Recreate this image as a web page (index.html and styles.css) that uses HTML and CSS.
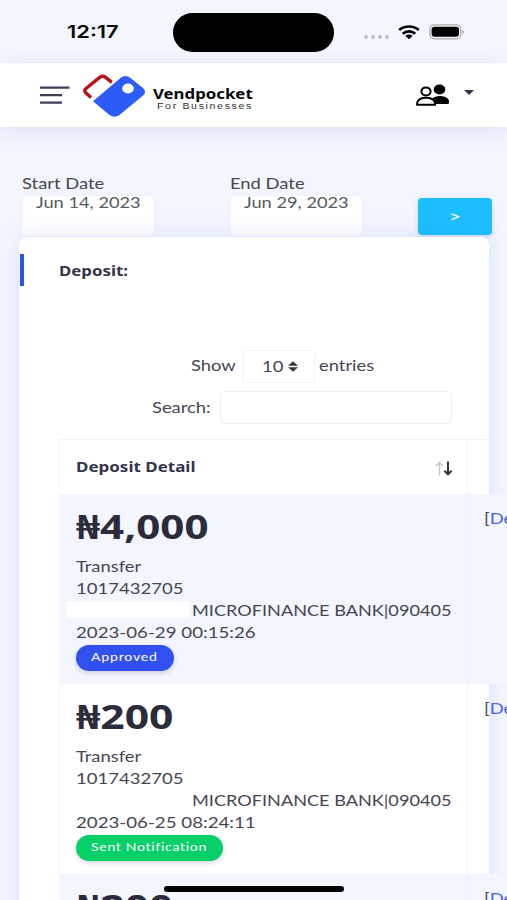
FILE: index.html
```
<!DOCTYPE html>
<html lang="en">
<head>
<meta charset="utf-8">
<title>Vendpocket</title>
<link rel="stylesheet" href="styles.css">
</head>
<body>
<div class="screen">
  <header class="status">
    <span class="clock">12:17</span>
    <div class="island"></div>
    <div class="signal"><i></i><i></i><i></i><i></i></div>
    <svg class="wifi" width="22" height="15" viewBox="0 0 22 15">
      <g fill="none" stroke="#000" stroke-width="2.7"><path d="M1.2 5.1C6.5.3 15.500.3 20.800 5.100"/><path d="M4.800 8.700C8.300 5.600 13.700 5.600 17.200 8.700"/></g>
      <path d="M7.300 10.800Q11 8.200 14.700 10.800L11 14.200Z"/>
    </svg>
    <svg class="battery" width="37" height="16" viewBox="0 0 37 16">
      <rect x=".8" y=".8" width="31" height="14" rx="4.500" fill="#f5f7fd" stroke="#aaabae" stroke-width="1.200"/>
      <rect x="2.600" y="2.800" width="27.400" height="10" rx="3"/>
      <path d="M33.500 5.800Q36 8 33.500 10.200Z" fill="#8d8e92"/>
    </svg>
  </header>

  <nav class="nav">
    <svg class="menu" width="30" height="19" viewBox="0 0 30 19"><path d="M0 1.700H29.500M0 9.200H22M0 16.700H22" stroke="#403d5c" stroke-width="2.200"/></svg>
    <svg class="logo" width="65" height="45" viewBox="0 0 65 45">
      <path d="M9 24.500L3.800 19.800Q1.600 17.500 4 15.500L18 4.200Q20.700 2.200 23.300 4.200L29.800 9.300" fill="none" stroke="#b8111f" stroke-width="3.400"/>
      <path d="M11 28.200L38.500 5Q43.500 1.100 48.500 5L61 15Q65 18.700 61 22.500L37.500 41.900Q32.500 45.500 27.500 41.900Z" fill="#2d5bf8"/>
      <ellipse cx="46" cy="15.500" rx="5.800" ry="5.100" fill="#fff"/>
    </svg>
    <div class="brand"><div class="brand-name">Vendpocket</div><div class="brand-tag">For Businesses</div></div>
    <svg class="people" width="34" height="22" viewBox="0 0 34 22">
      <ellipse cx="23.500" cy="5.500" rx="5.800" ry="5"/>
      <path d="M15 20V15.500Q18 12 24 12Q33 12.500 33 17.500V19Q33 20 31.500 20Z"/>
      <ellipse cx="10" cy="7.400" rx="4.600" ry="4" fill="#fff" stroke="#000" stroke-width="2"/>
      <path d="M1.200 20.700V18.500Q3 13.800 10 13.800T19 18.500V20.700Z" fill="#fff" stroke="#000" stroke-width="2"/>
    </svg>
    <i class="caret"></i>
  </nav>

  <main class="content">
    <form class="filters">
      <label class="field"><span class="text">Start Date</span><span class="date"><span class="text">Jun 14, 2023</span></span></label>
      <label class="field"><span class="text">End Date</span><span class="date"><span class="text">Jun 29, 2023</span></span></label>
      <button type="button" class="go"><span class="text">&gt;</span></button>
    </form>

    <section class="card">
      <h2 class="title"><span class="bold">Deposit:</span></h2>
      <div class="length"><span class="text show">Show</span>
        <span class="select"><span class="text">10</span><svg width="10" height="11" viewBox="0 0 10 11"><path d="M0 4.700L5 .2L10 4.700ZM0 6.300H10L5 10.800Z" fill="#343a40"/></svg></span>
        <span class="text lift">entries</span></div>
      <div class="search"><span class="text label">Search:</span><input class="box" aria-label="Search"></div>

      <div class="table">
        <div class="row head">
          <div class="cell"><span class="bold wide">Deposit Detail</span>
            <svg class="sort" width="18" height="15" viewBox="0 0 18 15"><path d="M4.500 14.500V1.500M1 5.200L4.500 1.500L8 5.200" fill="none" stroke="#c2c2c8" stroke-width="1.300"/><path d="M13 .5V13M9.400 9.800L13 13.300L16.600 9.800" fill="none" stroke="#34343f" stroke-width="2"/></svg>
          </div>
          <div class="cell side"></div>
        </div>
        <div class="row odd">
          <div class="cell">
            <div class="amount">₦4,000</div>
            <div class="line">Transfer</div><div class="line number">1017432705</div>
            <div class="bank"><span class="line">MICROFINANCE BANK|090405</span></div>
            <div class="line stamp">2023-06-29 00:15:26</div>
            <span class="badge approved"><span>Approved</span></span>
          </div>
          <div class="cell side"><span class="text">[<a>Details]</a></span></div>
        </div>
        <div class="row">
          <div class="cell">
            <div class="amount small">₦200</div>
            <div class="line">Transfer</div><div class="line number">1017432705</div>
            <div class="bank"><span class="line">MICROFINANCE BANK|090405</span></div>
            <div class="line stamp">2023-06-25 08:24:11</div>
            <span class="badge sent"><span>Sent Notification</span></span>
          </div>
          <div class="cell side"><span class="text">[<a>Details]</a></span></div>
        </div>
        <div class="row odd">
          <div class="cell"><div class="amount small">₦200</div></div>
          <div class="cell side"><span class="text">[<a>Details]</a></span></div>
        </div>
      </div>
    </section>
  </main>
  <div class="home"></div>
</div>
</body>
</html>
```
FILE: styles.css
```
* { box-sizing: border-box; }
body { margin: 0; font: 15px/22px Lato, "Noto Sans", sans-serif; color: #464652; }
.screen { position: relative; width: 507px; height: 900px; overflow: hidden; background: #f3f6fe; }

/* Wide lettering: glyphs are stretched horizontally from their left edge */
.text, .line, .bold, .amount, .clock, .brand-name, .brand-tag, .badge span {
  display: inline-block; white-space: nowrap; transform: scaleX(1.225); transform-origin: 0 50%;
}
.bold { font: 700 14.5px/22px "Noto Sans", sans-serif; color: #34344a; transform: scaleX(1.16); }
.bold.wide { margin-top: -2px; transform: scaleX(1.17); }

.status { display: flex; align-items: center; height: 63px; padding-top: 1px; }
.clock { flex: none; width: 106px; margin-left: 67px; font: 600 17.5px/22px Inter, sans-serif; color: #08080b; transform: scaleX(1.25); }
.island { width: 161px; height: 39px; border-radius: 20px; background: #000; flex: none; }
.signal { display: flex; gap: 3px; margin: 9px 0 0 30px; }
.signal i { width: 4px; height: 4px; border-radius: 50%; background: #bcbdc5; }
.wifi { margin-left: 9px; flex: none; }
.battery { margin-left: 9px; flex: none; }

.nav { position: relative; display: flex; align-items: center; height: 64px; padding: 0 33px 0 40px; background: #fff; box-shadow: 0 4px 18px rgba(60, 70, 180, .11); }
.logo { margin: 0 0 0 12px; }
.brand { width: 102px; margin: 6px 0 0 6px; color: #08080b; }
.brand-name, .brand-tag { display: block; }
.brand-name { font: 700 14px/15px "Noto Sans", sans-serif; transform: scaleX(1.2); width: 84px; }
.brand-tag { margin: 0 0 0 4px; width: 80px; font: 8.5px/10px "Liberation Sans", sans-serif; letter-spacing: 1.3px; color: #333; transform: scaleX(1.25); }
.people { margin: 0 0 0 auto; }
.caret { margin: -6px 0 0 14px; border: 5px solid transparent; border-top: 5px solid #34344a; border-bottom: 0; }

.content { padding: 0 18px 0 20px; }
.filters { display: flex; height: 110px; padding: 46px 0 0 2px; }
.field { width: 208px; height: 64px; flex: none; }
.field > .text { display: block; height: 22px; width: 80px; line-height: 21px; }
.date { display: block; width: 133px; height: 42px; padding-left: 13px; border: 1px solid #f0f3fb; border-radius: 5px; background: #fff; line-height: 13px; }
.date .text { color: #555c63; transform: scaleX(1.215); }
.go { width: 74px; height: 37px; margin: 25px -12px 0 -20px; padding: 0 0 2px; flex: none; border: 0; border-radius: 4px; background: #1dbfff; color: #fff; font: inherit; box-shadow: 0 2px 6px rgba(30, 80, 255, .15); }
.go .text { transform: scaleX(1.4); transform-origin: 60% 50%; }

.card { position: relative; width: 470px; height: 700px; margin-left: -1px; padding: 17px 0 0 40px; border-radius: 8px; background: #fff; box-shadow: 0 0 25px rgba(80, 100, 220, .14); }
.title { height: 32px; margin: 0 0 0 -39px; padding: 5px 0 0 35px; border-left: 4px solid #2f52ea; font-size: 14px; line-height: 21px; }
.length { display: flex; align-items: center; height: 33px; margin: 64px 0 0 132px; }
.show { width: 51px; }
.show, .lift { margin-top: -3px; }
.select { display: flex; align-items: center; width: 73px; height: 33px; margin-right: 4px; padding-left: 19px; border: 1px solid #f2f3f5; border-radius: 4px; }
.select .text { width: 26px; margin-top: -2px; }
.search { display: flex; align-items: center; height: 33px; margin: 8px 0 0 93px; }
.search .label { width: 68px; margin-top: -2px; }
.box { width: 232px; height: 33px; border: 1px solid #eff0f3; border-radius: 4px; background: #fff; outline: 0; }

.table { width: 520px; margin-top: 15px; border: solid #f2f3f6; border-width: 1px 0 0 1px; }
.row { display: grid; grid-template-columns: 408px 1fr; height: 190px; }
.row.head { height: 54px; }
.row.head .cell { display: flex; align-items: center; justify-content: space-between; padding: 0 14px 0 16px; }
.row.head .cell.side { width: 22px; }
.sort { margin-top: 3px; }
.odd { background: #f3f6fe; }
.cell { padding: 13px 0 0 16px; border-right: 1px solid #f1f3f8; }
.cell.side { padding: 13px 0 0 16px; border-right: 0; }
.side a { color: #4c63e8; }
.amount { display: block; width: 112px; height: 49px; font: 700 34.5px/38px "Noto Sans", sans-serif; color: #2b2b3c; transform: scaleX(1.222); }
.amount.small { transform: scaleX(1.235); }
.line { display: block; width: 100px; height: 22px; line-height: 21px; }
.line.number { transform: scaleX(1.235); }
.bank { display: flex; align-items: center; height: 22px; margin-left: -10px; }
.bank::before { content: ""; width: 124px; height: 17px; margin: -3px 1.500px 0 0; background: #fff; }
.bank .line { transform: scaleX(1.208); }
.stamp { transform: scaleX(1.245); }
.badge { display: block; height: 26px; margin-top: 1px; padding-left: 15px; border-radius: 13px; color: #fff; font-size: 11.5px; line-height: 24px; box-shadow: 0 2px 5px rgba(50, 60, 100, .2); }
.badge span { letter-spacing: .65px; }
.approved { width: 98px; background: #3150ef; }
.sent { width: 147px; background: #07d069; }
.sent span { letter-spacing: .55px; }

.home { position: absolute; left: 164px; bottom: 8px; width: 180px; height: 6px; border-radius: 3px; background: #000; }
```
